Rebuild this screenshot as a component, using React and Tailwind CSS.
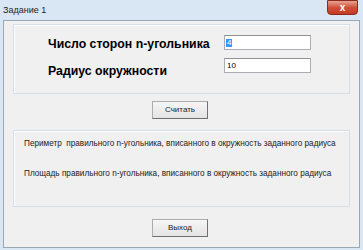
import React from 'react';

const font = { fontFamily: '"Liberation Sans", Arial, sans-serif' };

const WinButton = ({ children }) => (
  <button className="w-[56px] h-[18px] border border-[#acacac] border-r-[#707070] border-b-[#707070] bg-gradient-to-b from-[#f6f6f6] to-[#e4e4e4] text-[8px] text-[#222] flex items-center justify-center leading-none">
    {children}
  </button>
);

const App = () => {
  return (
    <div className="w-[363px] h-[250px] bg-[#d9e6f3] flex flex-col overflow-hidden" style={font}>
      <div className="h-[20px] flex items-start justify-between shrink-0">
        <span className="pl-[3px] pt-[6px] text-[9px] text-[#1e1e1e] leading-none">Задание 1</span>
        <div className="mr-[5px] w-[31px] h-[15px] rounded-b-[4px] border border-[#8a2a1c] bg-gradient-to-b from-[#e8a293] via-[#d0503a] to-[#c43a22] flex items-center justify-center">
          <span className="text-white text-[10px] font-bold leading-none">x</span>
        </div>
      </div>
      <div className="flex-1 mx-[3px] mb-[2px] border border-[#9aa8b6] bg-[#f0f0f0] flex flex-col items-stretch px-[9px] pt-[3px]">
        <div className="h-[70px] border border-[#d5dfe5] shadow-[inset_1px_1px_0_#fff] flex flex-col pl-[34px] pt-[10px]">
          <div className="flex items-start">
            <span className="w-[176px] text-[12.3px] font-bold text-black leading-none pt-[3px]">Число сторон n-угольника</span>
            <div className="w-[87px] h-[15px] bg-white border border-[#abadb3] border-t-[#8f9396] flex items-center pl-[1px]">
              <span className="text-[8px] leading-none text-white bg-[#3399ff] px-[1px]">4</span>
            </div>
          </div>
          <div className="flex items-start mt-[8px]">
            <span className="w-[176px] text-[12.3px] font-bold text-black leading-none pt-[7px]">Радиус окружности</span>
            <div className="w-[87px] h-[15px] bg-white border border-[#abadb3] border-t-[#8f9396] flex items-center pl-[2px]">
              <span className="text-[8px] leading-none text-black">10</span>
            </div>
          </div>
        </div>
        <div className="flex justify-center pt-[7px] pb-[11px] pr-[3px]">
          <WinButton>Считать</WinButton>
        </div>
        <div className="h-[77px] border border-[#d5dfe5] shadow-[inset_1px_1px_0_#fff] flex flex-col pl-[10px] pt-[9px] text-[8.2px] text-[#222] leading-none">
          <span>Периметр&nbsp; правильного n-угольника, вписанного в окружность заданного радиуса</span>
          <span className="mt-[22px]">Площадь правильного n-угольника, вписанного в окружность заданного радиуса</span>
        </div>
        <div className="flex justify-center pt-[12px] pr-[3px]">
          <WinButton>Выход</WinButton>
        </div>
      </div>
    </div>
  );
};

export default App;
